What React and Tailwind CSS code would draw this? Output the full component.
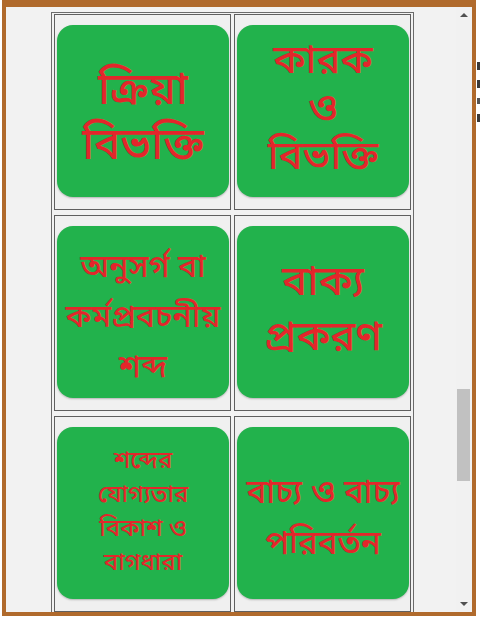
const bn = "[font-family:'Noto_Sans_Bengali','Noto_Serif_Bengali','Lohit_Bengali','FreeSans',sans-serif]";

const tiles = [
  { lines: ["ক্রিয়া", "বিভক্তি"], text: "text-[44px] leading-[55px]", pad: "pt-[20px]" },
  { lines: ["কারক", "ও", "বিভক্তি"], text: "text-[40px] leading-[48px]", pad: "" },
  { lines: ["অনুসর্গ বা", "কর্মপ্রবচনীয়", "শব্দ"], text: "text-[32px] leading-[50px]", pad: "pt-[14px]" },
  { lines: ["বাক্য", "প্রকরণ"], text: "text-[42px] leading-[55px]", pad: "" },
  { lines: ["শব্দের", "যোগ্যতার", "বিকাশ ও", "বাগধারা"], text: "text-[24px] leading-[34px]", pad: "" },
  { lines: ["বাচ্য ও বাচ্য", "পরিবর্তন"], text: "text-[33px] leading-[51px]", pad: "pt-[14px]" },
];

function Tile({ tile }) {
  return (
    <div className="h-[196px] w-[177px] border border-[#5f5f5f] bg-[#f0f0f0] pl-[2px] pt-[10px]">
      <div
        className={`flex h-[172px] w-[172px] flex-col items-center justify-center rounded-[16px] bg-[#22b24c] text-center font-medium text-[#e3262b] shadow-[0_1px_2px_rgba(0,0,0,0.25)] ${bn} ${tile.text} ${tile.pad}`}
      >
        {tile.lines.map((l) => (
          <span key={l} className="block whitespace-nowrap">
            {l}
          </span>
        ))}
      </div>
    </div>
  );
}

export default function App() {
  return (
    <div className="flex h-[619px] w-[480px] bg-white pl-[2px]">
      <div className="flex h-[616px] w-[474px] flex-col border-x-[4px] border-t-[7px] border-b-[4px] border-[#b06a2c] bg-[#f2f2f2]">
        <div className="flex flex-1 overflow-hidden">
          <div className="flex-1 overflow-hidden pl-[45px] pt-[5px]">
            <div className="grid w-[363px] grid-cols-[177px_177px] gap-x-[3px] gap-y-[5px] border border-[#6b6b6b] p-[2px] pt-[1px]">
              {tiles.map((t, i) => (
                <Tile key={i} tile={t} />
              ))}
            </div>
          </div>
          <div className="flex w-[16px] flex-col items-center bg-[#f1f1f1]">
            <div className="mt-[6px] h-0 w-0 border-x-[4px] border-b-[4px] border-x-transparent border-b-[#505050]" />
            <div className="w-full flex-1">
              <div className="ml-[1px] mt-[372px] h-[92px] w-[13px] bg-[#c1c1c1]" />
            </div>
            <div className="mb-[6px] h-0 w-0 border-x-[4px] border-t-[4px] border-x-transparent border-t-[#505050]" />
          </div>
        </div>
      </div>
      <div className="flex w-[4px] flex-col gap-[10px] pl-[1px] pt-[62px]">
        <div className="h-[8px] w-[3px] bg-[#3a3a3a]" />
        <div className="h-[8px] w-[3px] bg-[#3a3a3a]" />
        <div className="h-[6px] w-[3px] bg-[#555]" />
        <div className="h-[8px] w-[3px] bg-[#3a3a3a]" />
      </div>
    </div>
  );
}
